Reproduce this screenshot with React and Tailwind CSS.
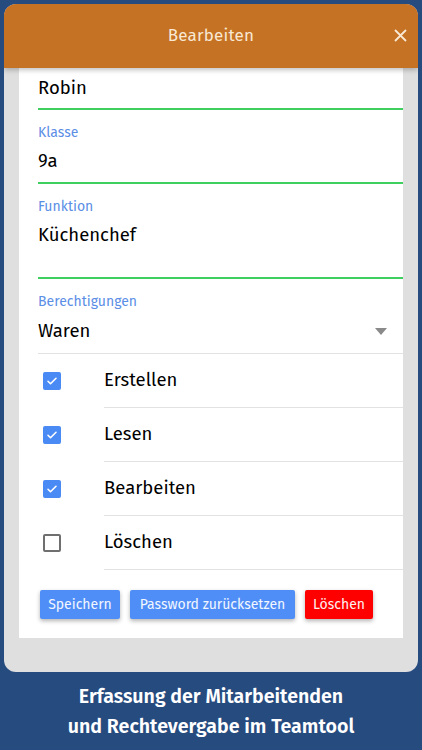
import { useState } from "react";

const font = { fontFamily: '"Fira Sans", "Open Sans", "Noto Sans", sans-serif' };

function Field({ label, value, tall }) {
  return (
    <div className="mt-[15px]">
      <div className="text-[14px] leading-[16px] text-[#5b8ee6]">{label}</div>
      <div
        className={
          "mt-[8px] text-[18.5px] leading-[24px] text-black border-b-2 border-[#3fcf5e] " +
          (tall ? "pb-[30px]" : "pb-[9px]")
        }
      >
        {value}
      </div>
    </div>
  );
}

function CheckRow({ label, checked, onToggle }) {
  return (
    <div className="flex items-stretch h-[54px]">
      <div className="w-[66px] flex items-center pl-[5px]">
        <button
          onClick={onToggle}
          className={
            "w-[18px] h-[18px] rounded-[2px] flex items-center justify-center " +
            (checked ? "bg-[#4a8af4]" : "border-2 border-[#6f6f6f] bg-white")
          }
        >
          {checked && (
            <svg width="12" height="12" viewBox="0 0 24 24">
              <path d="M4 12.5l5 5L20 6.5" fill="none" stroke="white" strokeWidth="3.2" strokeLinecap="round" strokeLinejoin="round" />
            </svg>
          )}
        </button>
      </div>
      <div className="flex-1 flex items-center border-b border-[#e2e2e2] text-[18.5px] text-black">{label}</div>
    </div>
  );
}

export default function App() {
  const [perms, setPerms] = useState({ Erstellen: true, Lesen: true, Bearbeiten: true, Löschen: false });
  return (
    <div className="w-[422px] h-[750px] bg-[#264b7f] pt-[4px] overflow-hidden" style={font}>
      <div className="mx-[4px] h-[668px] rounded-[12px] bg-[#e0dfe0] overflow-hidden flex flex-col">
        <div className="relative z-10 h-[64px] bg-[#c57224] flex items-center justify-center shadow-[0_2px_5px_rgba(0,0,0,0.25)]">
          <span className="text-[17px] text-[#f8e8d4] tracking-[0.2px]">Bearbeiten</span>
          <svg className="absolute right-[11px] top-[25px]" width="13" height="13" viewBox="0 0 13 13">
            <path d="M1 1L12 12M12 1L1 12" stroke="#f8e8d4" strokeWidth="1.8" />
          </svg>
        </div>
        <div className="mx-[15px] h-[570px] bg-white pl-[19px] pt-[8px]">
          <div className="text-[18.5px] leading-[24px] text-black border-b-2 border-[#3fcf5e] pb-[8px]">Robin</div>
          <Field label="Klasse" value="9a" />
          <Field label="Funktion" value="Küchenchef" tall />
          <div className="mt-[15px]">
            <div className="text-[14px] leading-[16px] text-[#5b8ee6]">Berechtigungen</div>
            <div className="mt-[9px] flex items-center justify-between text-[18.5px] leading-[24px] text-black border-b border-[#e2e2e2] pb-[10px]">
              <span>Waren</span>
              <svg className="mr-[16px]" width="12" height="7" viewBox="0 0 12 7">
                <path d="M0 0H12L6 7Z" fill="#8a8a8a" />
              </svg>
            </div>
          </div>
          {Object.keys(perms).map((k) => (
            <CheckRow key={k} label={k} checked={perms[k]} onToggle={() => setPerms({ ...perms, [k]: !perms[k] })} />
          ))}
          <div className="mt-[20px] ml-[2px] flex gap-[10px] text-[14px]">
            <button className="w-[80px] h-[29px] rounded-[2px] bg-[#4f8ef7] text-[#f2f6ff] shadow-[0_2px_4px_rgba(0,0,0,0.3)]">Speichern</button>
            <button className="w-[165px] h-[29px] rounded-[2px] bg-[#4f8ef7] text-[#f2f6ff] shadow-[0_2px_4px_rgba(0,0,0,0.3)]">Password zurücksetzen</button>
            <button className="w-[68px] h-[29px] rounded-[2px] bg-[#ff0000] text-[#fff0f0] shadow-[0_2px_4px_rgba(0,0,0,0.3)]">Löschen</button>
          </div>
        </div>
      </div>
      <div className="pt-[10px] text-center text-white font-semibold text-[19.6px] leading-[30px]">
        <div>Erfassung der Mitarbeitenden</div>
        <div>und Rechtevergabe im Teamtool</div>
      </div>
    </div>
  );
}
